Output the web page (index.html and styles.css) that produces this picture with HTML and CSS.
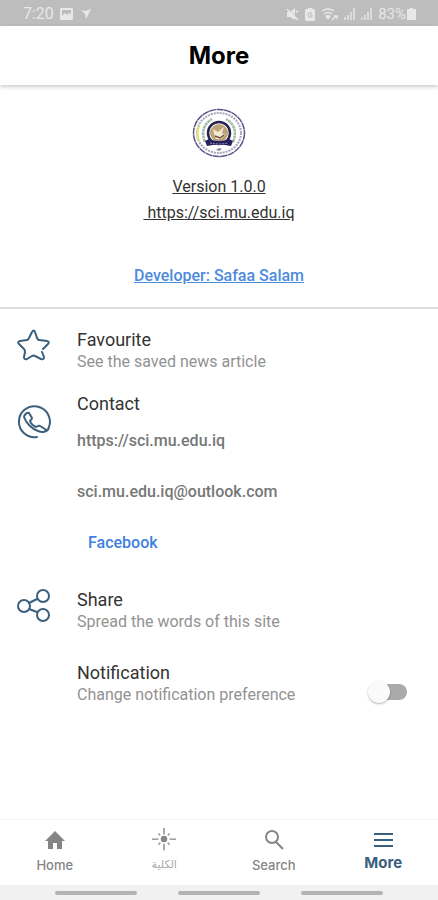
FILE: index.html
```html
<!DOCTYPE html>
<html lang="en">
<head>
    <meta charset="utf-8">
    <meta name="viewport" content="width=device-width, initial-scale=1">
    <title>More</title>
    <link rel="stylesheet" href="styles.css">
</head>
<body>
    <div class="status-bar">
        <span>7:20</span>
        <svg class="photo" width="13" height="12" viewBox="0 0 13 12"><path fill="currentColor" fill-rule="evenodd" d="M1 0h11l1 1v10l-1 1H1l-1-1V1zM2 2v6l3-3 2 2 2-2 2 1V2z"/></svg>
        <svg class="arrow" width="10" height="10" viewBox="0 0 10 10"><path fill="currentColor" d="M0 1l4 1 6-2-5 10-1-5z"/></svg>
        <div class="status-right">
            <svg width="13" height="13" viewBox="0 0 13 13"><path fill="currentColor" d="M1 4h3l5-4v12L4 9H1z"/><path stroke="#bdbdbd" d="M1 0l12 11"/><path stroke="currentColor" stroke-width="1.5" d="M1 1l11 11M10 4l2-1"/></svg>
            <svg width="10" height="13" viewBox="0 0 10 13"><path fill="currentColor" d="M3 0h4v1h2l1 1v10l-1 1H1l-1-1V2l1-1h2z"/><path fill="none" stroke="#bdbdbd" d="M7 5H4L3 7l1 2h3V7H5"/></svg>
            <svg width="17" height="13" viewBox="0 0 17 13"><g fill="none" stroke="currentColor" stroke-width="1.5"><path d="M1 3q6-4 12 0M3 6q4-3 8 0"/><path d="M11 12l4-4m-2 0h3v3"/></g><path fill="currentColor" d="M4 8q3-2 6 0l-3 4z"/></svg>
            <svg width="11" height="12" viewBox="0 0 11 12"><path fill="currentColor" opacity=".7" d="M0 12V9h2v3zm3 0V7h2v5zm3 0V4h2v8zm3 0V0h2v12z"/></svg>
            <svg width="11" height="12" viewBox="0 0 11 12"><path fill="currentColor" opacity=".7" d="M0 12V9h2v3zm3 0V7h2v5zm3 0V4h2v8zm3 0V0h2v12z"/></svg>
            <span class="battery">83%<svg width="9" height="12" viewBox="0 0 9 12"><path fill="currentColor" d="M3 0h3v1h3v11H0V1h3z"/></svg></span>
        </div>
    </div>

    <header class="header">
        <h1>More</h1>
    </header>

    <main>
        <section class="about">
            <svg class="logo" width="54" height="50" viewBox="0 0 54 50">
                <ellipse cx="27" cy="25" rx="25.500" ry="23.500" fill="#fff" stroke="#5a5489" stroke-width="1.500" stroke-dasharray="7 .5"/>
                <ellipse cx="27" cy="25" rx="22" ry="20" fill="none" stroke="#a5a3b9" stroke-width="2" stroke-dasharray="2 1"/>
                <path d="M7 18q-3 7 0 15" fill="none" stroke="#dde26b" stroke-width="2"/>
                <path d="M13 34Q7 19 20 11M41 34q6-15-7-23" fill="none" stroke="#a3bba9" stroke-width="2.500" stroke-dasharray="3 .5"/>
                <circle cx="27" cy="25" r="11" fill="#fff" stroke="#292052" stroke-width="2.500"/>
                <circle cx="27" cy="25" r="9" fill="#bda477"/>
                <path d="M21 21l5 3 6-5-2 6 3 2-4 4h-5l-2-5z" fill="#f3ead2"/>
                <path d="M23 28l5 2 4-3" fill="none" stroke="#725337" stroke-width="1.500"/>
                <path d="M13 33l4-2q10 4 20 0l4 2-2 5q-12-3-24 0z" fill="#27205e"/>
                <path d="M18 35q9 2 18 0" fill="none" stroke="#9a96bd" stroke-dasharray="2 1"/>
                <path d="M24 42l3-2 3 1-3 2z" fill="#88849d"/>
            </svg>
            <p class="version">Version 1.0.0</p>
            <a class="site" href="https://sci.mu.edu.iq">&nbsp;https://sci.mu.edu.iq</a>
            <a class="developer" href="#">Developer: Safaa Salam</a>
        </section>

        <section class="settings">
            <div class="row">
                <svg class="icon" width="34" height="34" viewBox="0 0 34 34"><path d="M26 20l5-5q2-2-1-3l-8-1q-1 0-2-2l-2-6q-1-3-3 0l-3 6q-1 2-2 2l-7 1q-3 1-1 3l5 5q1 1 1 3l-1 5q0 3 3 2l5-3q2-1 3 0l6 3q3 1 3-2l-2-5"/></svg>
                <div class="text">
                    <h2>Favourite</h2>
                    <p>See the saved news article</p>
                </div>
            </div>

            <div class="row contact">
                <svg class="icon" width="34" height="34" viewBox="0 0 34 34"><path d="M20 32A15.500 15.500 0 1 1 32 22c-1 5-6 6-11 4C15 24 9 18 7 12c0-2 3-5 5-4l3 5c0 2-2 2-2 3 1 3 4 5 6 6 1 0 2-2 4-1l5 3c1 1 0 3-1 3"/></svg>
                <div class="text">
                    <h2>Contact</h2>
                    <a href="https://sci.mu.edu.iq">https://sci.mu.edu.iq</a>
                    <a href="mailto:sci.mu.edu.iq@outlook.com">sci.mu.edu.iq@outlook.com</a>
                    <a class="facebook" href="#">Facebook</a>
                </div>
            </div>

            <div class="row share">
                <svg class="icon" width="34" height="34" viewBox="0 0 34 34"><circle cx="7" cy="17" r="6"/><circle cx="26" cy="7" r="6"/><circle cx="26" cy="26" r="6"/><path d="M12 14l8-4m-8 10l8 3"/></svg>
                <div class="text">
                    <h2>Share</h2>
                    <p>Spread the words of this site</p>
                </div>
            </div>

            <div class="row notification">
                <div class="text">
                    <h2><label for="notify">Notification</label></h2>
                    <p>Change notification preference</p>
                </div>
                <input type="checkbox" id="notify" class="switch">
            </div>
        </section>
    </main>

    <nav class="tabs">
        <a href="#">
            <svg width="24" height="24" viewBox="0 0 24 24"><path fill="currentColor" d="M10 21v-6h4v6h5v-8h3L12 3 2 13h3v8z"/></svg>
            <span>Home</span>
        </a>
        <a href="#">
            <svg width="24" height="24" viewBox="0 0 26 26"><circle cx="13" cy="12" r="3.500" fill="currentColor"/><path fill="none" stroke="currentColor" stroke-width="1.500" d="M13 0v7m0 10v7M0 12h7m12 0h7M7 6l2 2m8 8l2 2M7 18l2-2m8-8l2-2"/></svg>
            <span class="arabic" lang="ar">الكلية</span>
        </a>
        <a href="#">
            <svg width="26" height="24" viewBox="0 0 26 24"><path fill="none" stroke="currentColor" stroke-width="2" d="M15 14l7 7M17 9a6 6 0 1 1-12 0 6 6 0 0 1 12 0z"/></svg>
            <span>Search</span>
        </a>
        <a class="active" href="#">
            <svg width="24" height="24" viewBox="0 0 24 24"><path stroke="currentColor" stroke-width="2" d="M3 6h19M3 12h19M3 18h19"/></svg>
            <span>More</span>
        </a>
    </nav>

    <div class="system-bar"><span></span><span></span><span></span></div>
</body>
</html>
```
FILE: styles.css
```css
* {
    box-sizing: border-box;
}

body {
    display: flex;
    flex-direction: column;
    min-height: 100vh;
    margin: 0;
    font-family: Roboto, "Liberation Sans", sans-serif;
    font-size: 16px;
    line-height: 22px;
    color: #333;
    background-color: #fff;
}

h1, h2, p {
    margin: 0;
}

a {
    color: inherit;
    text-decoration: none;
}

svg {
    display: block;
    flex: none;
}

.status-bar {
    display: flex;
    align-items: center;
    height: 26px;
    padding: 2px 22px 0 23px;
    color: #e8e8e8;
    background-color: #bdbdbd;
}

.photo {
    margin: 0 8px 0 6px;
}

.status-right {
    display: flex;
    align-items: center;
    gap: 6px;
    margin-left: auto;
}

.battery {
    display: flex;
    align-items: center;
    gap: 1px;
    font-size: 15px;
}

.header {
    padding: 15px 0 14px;
    text-align: center;
    box-shadow: 0 2px 4px rgba(0, 0, 0, 0.2);
}

h1 {
    font-family: Inter, "Open Sans", sans-serif;
    font-size: 24px;
    line-height: 30px;
    font-weight: 700;
    color: #000;
}

main {
    flex: 1;
}

.about {
    display: flex;
    flex-direction: column;
    align-items: center;
    padding: 23px 0 20px;
    border-bottom: 2px solid #ddd;
}

.version {
    margin: 18px 0 4px;
    text-decoration: underline;
}

.site {
    text-decoration: underline;
}

.developer {
    margin-top: 41px;
    font-weight: 500;
    color: #4c8bdc;
    text-decoration: underline;
}

.settings {
    padding: 20px 31px 20px 17px;
}

.row {
    display: grid;
    grid-template-columns: 34px 1fr auto;
    column-gap: 26px;
}

.icon {
    fill: none;
    stroke: #3b607e;
    stroke-width: 2;
    stroke-linecap: round;
    stroke-linejoin: round;
}

.text {
    grid-column: 2;
}

h2 {
    font-size: 18px;
    line-height: 22px;
    font-weight: 400;
}

.text p {
    color: #929292;
}

.contact {
    margin-top: 20px;
}

.contact .icon {
    margin-top: 12px;
}

.contact a {
    display: block;
    width: fit-content;
    margin-top: 29px;
    font-weight: 500;
    color: #777;
}

.contact h2 + a {
    margin-top: 15px;
}

.contact .facebook {
    margin-left: 11px;
    color: #4080e0;
}

.share {
    margin-top: 35px;
}

.notification {
    margin-top: 29px;
}

.switch {
    appearance: none;
    position: relative;
    width: 36px;
    height: 16px;
    margin: 22px 0 0;
    border-radius: 8px;
    background-color: #aaa;
}

/* thumb */
.switch::before {
    content: "";
    position: absolute;
    top: -3px;
    left: -3px;
    width: 22px;
    height: 22px;
    border-radius: 50%;
    background-color: #fafafa;
    box-shadow: 0 1px 2px rgba(0, 0, 0, 0.3);
}

.switch:checked::before {
    left: 18px;
}

.tabs {
    display: flex;
    height: 66px;
    padding-top: 8px;
    border-top: 1px solid #f6f6f6;
    font-family: Inter, "Open Sans", sans-serif;
    font-size: 13px;
    line-height: 18px;
    font-weight: 500;
    color: #858585;
}

.tabs a {
    display: flex;
    flex: 1;
    flex-direction: column;
    align-items: center;
    gap: 4px;
}

.arabic {
    font-family: "DejaVu Sans", sans-serif;
    font-size: 11px;
    font-weight: 400;
    color: #aaa;
}

.tabs .active {
    gap: 2px;
    font-size: 15px;
    font-weight: 700;
    color: #3b607e;
}

.system-bar {
    display: flex;
    align-items: center;
    justify-content: center;
    gap: 41px;
    height: 15px;
    background-color: #f1f1f1;
}

.system-bar span {
    width: 82px;
    height: 4px;
    border-radius: 2px;
    background-color: #b3b3b3;
}
```
